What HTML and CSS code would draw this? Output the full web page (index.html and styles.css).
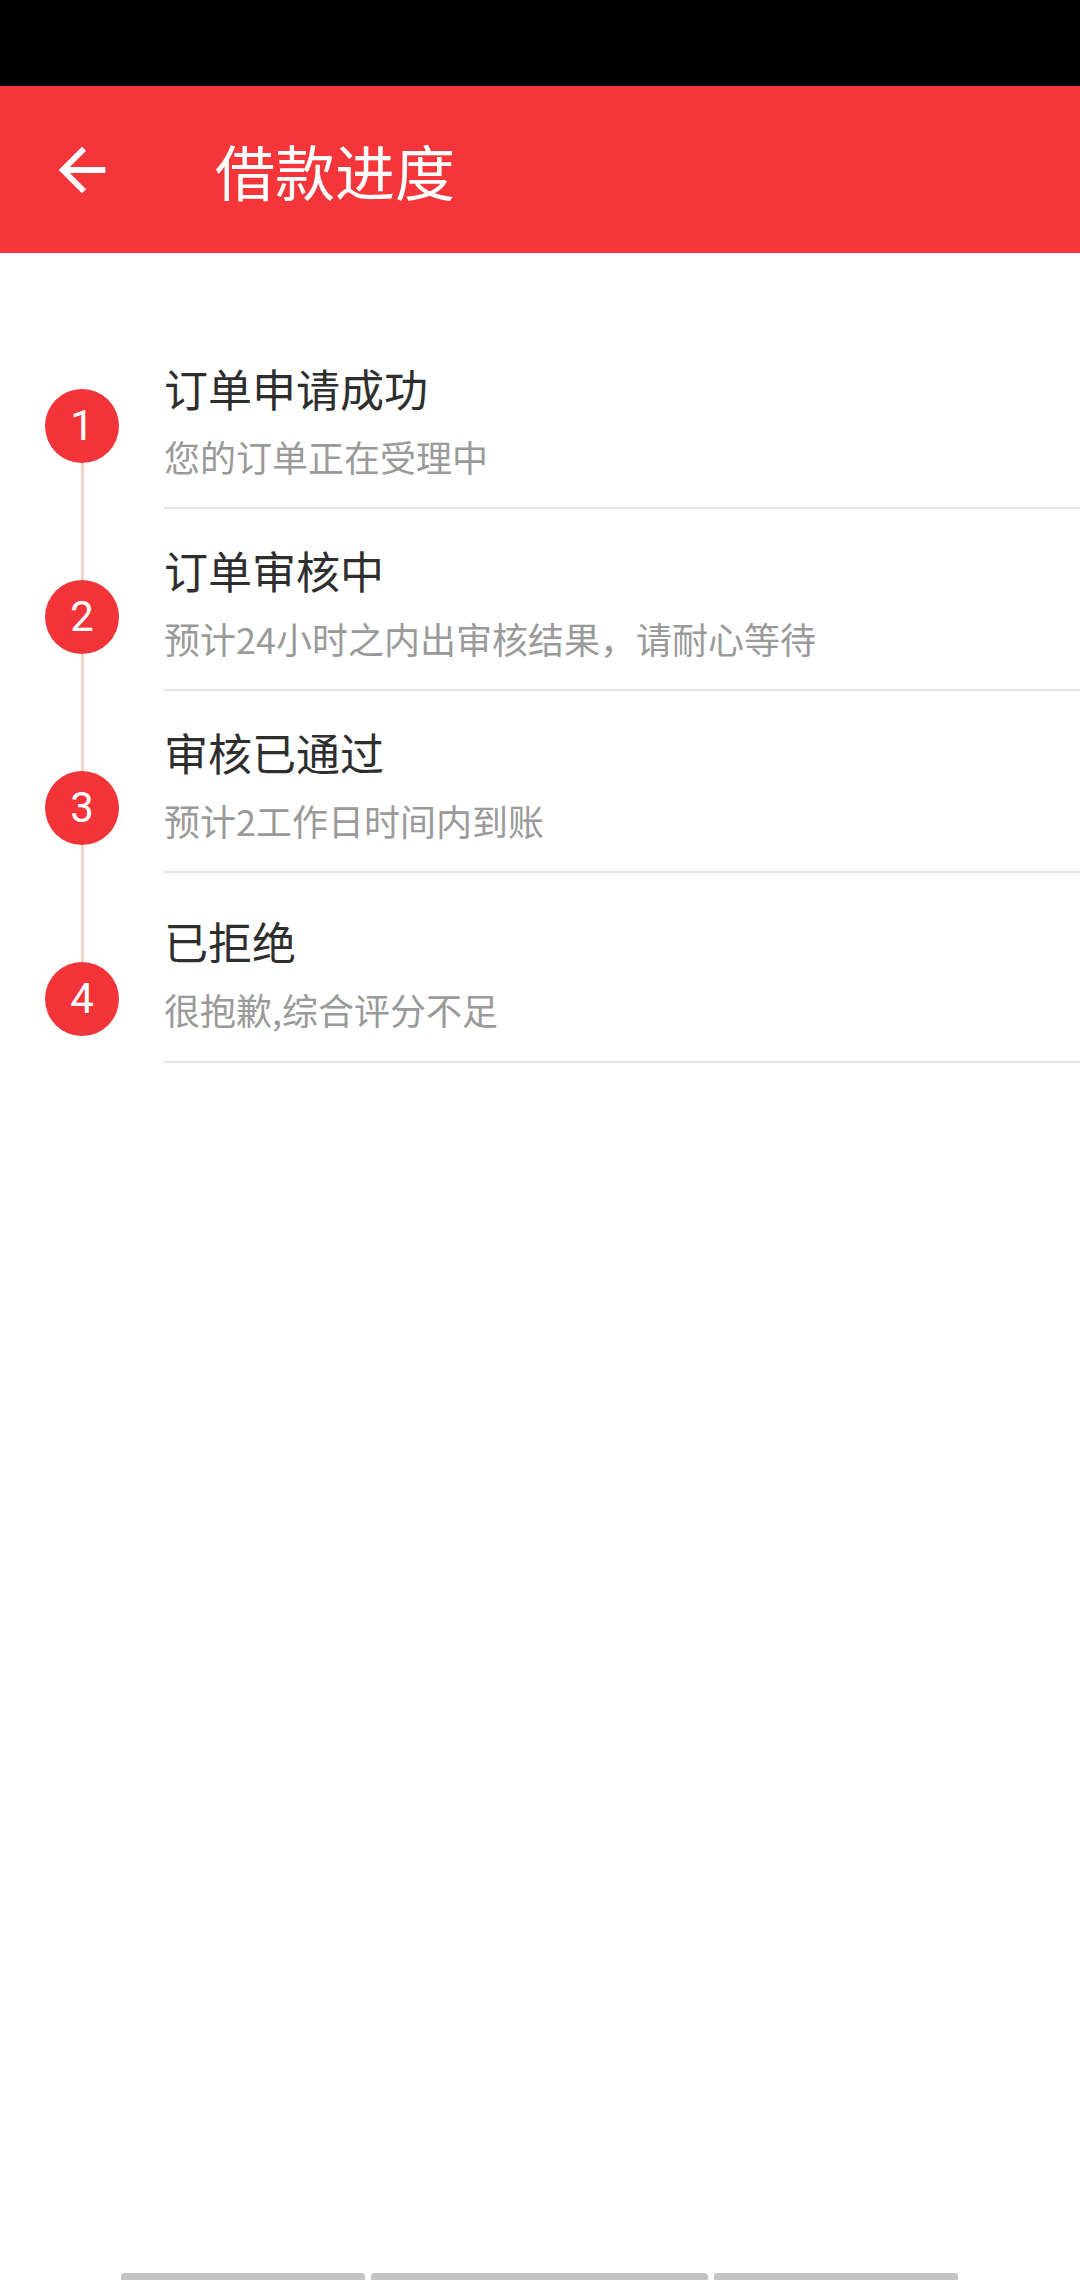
FILE: index.html
```html
<!DOCTYPE html>
<html lang="zh-CN">

<head>
    <meta charset="UTF-8">
    <title>借款进度</title>
    <link rel="stylesheet" href="styles.css">
</head>

<body>
    <div class="page">
        <div class="status-bar"></div>
        <header class="toolbar">
            <button class="back" aria-label="返回">
                <svg viewBox="0 0 24 24" width="70" height="70">
                    <path d="M20 11H7.83l5.59-5.59L12 4l-8 8 8 8 1.41-1.41L7.83 13H20v-2z" fill="#fff" />
                </svg>
            </button>
            <h1 class="title">借款进度</h1>
        </header>

        <main class="progress">
            <div class="timeline">
                <span class="dot">1</span>
                <span class="line"></span>
                <span class="dot">2</span>
                <span class="line"></span>
                <span class="dot">3</span>
                <span class="line"></span>
                <span class="dot">4</span>
            </div>
            <ul class="steps">
                <li class="step">
                    <p class="step-title">订单申请成功</p>
                    <p class="step-desc">您的订单正在受理中</p>
                </li>
                <li class="step">
                    <p class="step-title">订单审核中</p>
                    <p class="step-desc">预计24小时之内出审核结果，请耐心等待</p>
                </li>
                <li class="step">
                    <p class="step-title">审核已通过</p>
                    <p class="step-desc">预计2工作日时间内到账</p>
                </li>
                <li class="step last">
                    <p class="step-title">已拒绝</p>
                    <p class="step-desc">很抱歉,综合评分不足</p>
                </li>
            </ul>
        </main>

        <footer class="nav-hint">
            <span class="bar short"></span>
            <span class="bar long"></span>
            <span class="bar short"></span>
        </footer>
    </div>
</body>

</html>
```

FILE: styles.css
```css
* {
    box-sizing: border-box;
}

body {
    margin: 0;
    background: #fff;
    font-family: "Noto Sans CJK SC", "Noto Sans", sans-serif;
}

.page {
    width: 1080px;
    min-height: 2280px;
    display: flex;
    flex-direction: column;
}

.status-bar {
    height: 86px;
    background: #000;
}

.toolbar {
    height: 167px;
    background: #f43539;
    display: flex;
    align-items: center;
    padding-left: 47px;
}

.back {
    width: 70px;
    height: 70px;
    padding: 0;
    border: none;
    background: none;
    display: flex;
}

.title {
    margin: 0 0 0 98px;
    color: #fff;
    font-size: 60px;
    font-weight: normal;
    line-height: 70px;
}

.progress {
    display: flex;
}

.timeline {
    width: 164px;
    flex-shrink: 0;
    display: flex;
    flex-direction: column;
    align-items: center;
    padding-top: 136px;
}

.dot {
    width: 74px;
    height: 74px;
    border-radius: 50%;
    background: #f23438;
    color: #fff;
    font-family: Roboto, "Liberation Sans", sans-serif;
    font-size: 42px;
    line-height: 74px;
    text-align: center;
}

.line {
    width: 3px;
    height: 117px;
    background: #f3d3c9;
}

.steps {
    flex: 1;
    list-style: none;
    margin: 0;
    padding: 74px 0 0 0;
}

.step {
    padding: 31px 0 26px 0;
    border-bottom: 2px solid #e6e6e6;
}

.step.last {
    padding: 38px 0 27px 0;
}

.step p {
    margin: 0;
}

.step-title {
    color: #2e2e2e;
    font-size: 44px;
    line-height: 60px;
    margin-bottom: 14px !important;
}

.step-desc {
    color: #9a9a9a;
    font-size: 36px;
    line-height: 49px;
}

.nav-hint {
    margin-top: auto;
    display: flex;
    padding-left: 121px;
    gap: 6px;
}

.bar {
    height: 7px;
    background: #c4c4c4;
    border-radius: 4px 4px 0 0;
}

.bar.short {
    width: 244px;
}

.bar.long {
    width: 337px;
}
```
